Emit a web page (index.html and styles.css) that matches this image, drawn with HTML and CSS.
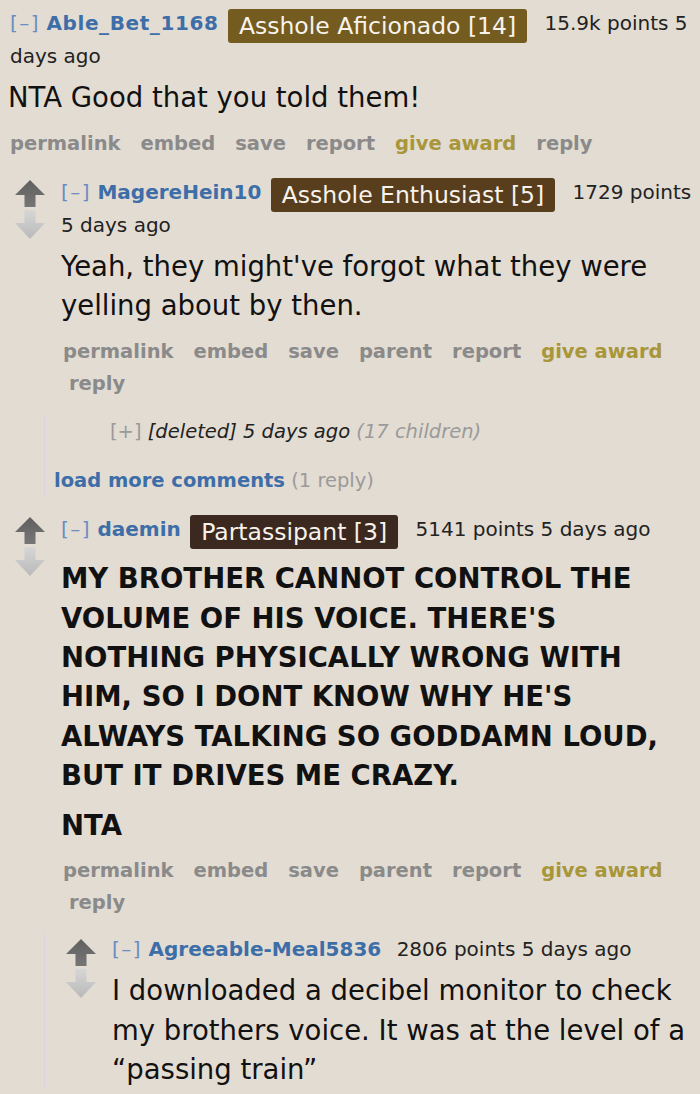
FILE: index.html
```html
<!DOCTYPE html>
<html lang="en">
<head>
<meta charset="utf-8">
<title>Comments</title>
<link rel="stylesheet" href="styles.css">
</head>
<body>
<svg class="defs" width="0" height="0" aria-hidden="true">
  <defs>
    <linearGradient id="gUp" x1="0" y1="0" x2="0" y2="1">
      <stop offset="0" stop-color="#5f5f5f"/>
      <stop offset="1" stop-color="#767676"/>
    </linearGradient>
    <linearGradient id="gDown" x1="0" y1="0" x2="0" y2="1">
      <stop offset="0" stop-color="#d6d6d6"/>
      <stop offset="1" stop-color="#b9b9b9"/>
    </linearGradient>
  </defs>
</svg>
<div class="page">
  <div class="thread">
    <div class="entry">
      <p class="tagline first"><span class="expand">[–]</span> <span class="author wide">Able_Bet_1168</span> <span class="flair f1">Asshole Aficionado [14]</span> <span class="score">15.9k points</span> 5 <span class="time">days ago</span></p>
      <div class="md"><p>NTA Good that you told them!</p></div>
      <ul class="buttons">
        <li>permalink</li><li>embed</li><li>save</li><li>report</li><li class="award">give award</li><li>reply</li>
      </ul>
    </div>

    <div class="replies">
      <div class="comment">
        <div class="midcol">
          <svg class="arrow up" viewBox="0 0 30 27" width="30" height="27"><polygon points="15,0 30,15 20.5,15 20.5,27 9.5,27 9.5,15 0,15"/></svg>
          <svg class="arrow down" viewBox="0 0 30 29" width="30" height="29"><polygon points="9.5,0 20.5,0 20.5,13 30,13 15,29 0,13 9.5,13"/></svg>
        </div>
        <div class="body">
          <div class="entry">
            <p class="tagline"><span class="expand">[–]</span> <span class="author">MagereHein10</span> <span class="flair f2">Asshole Enthusiast [5]</span> <span class="score">1729 points</span> <span class="time">5 days ago</span></p>
            <div class="md"><p>Yeah, they might've forgot what they were yelling about by then.</p></div>
            <ul class="buttons">
              <li>permalink</li><li>embed</li><li>save</li><li>parent</li><li>report</li><li class="award">give award</li><li>reply</li>
            </ul>
          </div>
        </div>
      </div>
      <div class="child">
        <div class="collapsed">
          <p class="tagline"><span class="muted">[+]</span> <em class="dark">[deleted] 5 days ago</em> <em class="muted">(17 children)</em></p>
        </div>
        <p class="more"><span class="more-link">load more comments</span> <span class="muted">(1 reply)</span></p>
      </div>

      <div class="comment sibling">
        <div class="midcol">
          <svg class="arrow up" viewBox="0 0 30 27" width="30" height="27"><polygon points="15,0 30,15 20.5,15 20.5,27 9.5,27 9.5,15 0,15"/></svg>
          <svg class="arrow down" viewBox="0 0 30 29" width="30" height="29"><polygon points="9.5,0 20.5,0 20.5,13 30,13 15,29 0,13 9.5,13"/></svg>
        </div>
        <div class="body">
          <div class="entry">
            <p class="tagline"><span class="expand">[–]</span> <span class="author">daemin</span> <span class="flair f3">Partassipant [3]</span> <span class="score">5141 points</span> <span class="time">5 days ago</span></p>
            <div class="md strong">
              <p>MY BROTHER CANNOT CONTROL THE VOLUME OF HIS VOICE. THERE'S NOTHING PHYSICALLY WRONG WITH HIM, SO I DONT KNOW WHY HE'S ALWAYS TALKING SO GODDAMN LOUD, BUT IT DRIVES ME CRAZY.</p>
              <p>NTA</p>
            </div>
            <ul class="buttons">
              <li>permalink</li><li>embed</li><li>save</li><li>parent</li><li>report</li><li class="award">give award</li><li>reply</li>
            </ul>
          </div>
        </div>
      </div>
      <div class="child last">
        <div class="comment nested">
          <div class="midcol">
            <svg class="arrow up" viewBox="0 0 30 27" width="30" height="27"><polygon points="15,0 30,15 20.5,15 20.5,27 9.5,27 9.5,15 0,15"/></svg>
            <svg class="arrow down" viewBox="0 0 30 29" width="30" height="29"><polygon points="9.5,0 20.5,0 20.5,13 30,13 15,29 0,13 9.5,13"/></svg>
          </div>
          <div class="body">
            <div class="entry">
              <p class="tagline"><span class="expand">[–]</span> <span class="author">Agreeable-Meal5836</span> <span class="score gap">2806 points</span> <span class="time">5 days ago</span></p>
              <div class="md"><p>I downloaded a decibel monitor to check my brothers voice. It was at the level of a “passing train”</p></div>
            </div>
          </div>
        </div>
      </div>
    </div>
  </div>
</div>
</body>
</html>
```

FILE: styles.css
```css
* { box-sizing: border-box; }
html, body {
  margin: 0;
  padding: 0;
  background: #e3dcd2;
}
body {
  font-family: "DejaVu Sans", Verdana, sans-serif;
  color: #111;
  overflow: hidden;
}
.defs { position: absolute; width: 0; height: 0; }
.page {
  width: 700px;
  padding: 9px 8px 0 8px;
}

/* tagline */
.tagline {
  margin: 0;
  font-size: 20px;
  line-height: 27px;
  color: #222;
}
.tagline.first { padding-left: 2px; }
.expand { color: #6a8ec2; letter-spacing: 1.5px; }
.author { color: #3d6ea8; font-weight: bold; }
.author.wide { letter-spacing: 0.6px; }
.flair {
  display: inline-block;
  font-size: 23.5px;
  line-height: 26px;
  letter-spacing: 0;
  padding: 4px 11px;
  border-radius: 3px;
  color: #f7f3ec;
  vertical-align: -4px;
  margin: 0 11px 0 3px;
}
.f1 { background: #745b1f; }
.f2 { background: #583e1c; }
.f3 { background: #3b2920; }
.gap { margin-left: 9px; }

/* body text */
.md {
  font-size: 27.5px;
  line-height: 39.3px;
  color: #111;
  margin-top: 8px;
}
.md p { margin: 0; }
.md p + p { margin-top: 11px; }
.md.strong { font-weight: bold; margin-top: 10px; }

/* buttons */
.buttons {
  list-style: none;
  margin: 11px 0 0 0;
  padding: 0;
  display: flex;
  flex-wrap: wrap;
  font-size: 19.5px;
  line-height: 31.5px;
  font-weight: bold;
  color: #8a8a8a;
}
.md.strong + .buttons { margin-top: 10px; }
.buttons li { padding: 0 12px 0 8px; }
.buttons li:first-child { padding-left: 2px; }
.buttons .award { color: #a8963a; }

/* nesting */
.replies {
  padding-left: 7px;
  margin-top: 18px;
}
.comment {
  display: flex;
  align-items: flex-start;
}
.comment.sibling { margin-top: 19px; }
.midcol {
  width: 46px;
  flex: none;
  display: flex;
  flex-direction: column;
  gap: 3px;
  padding-top: 2px;
}
.nested .midcol { padding-top: 3px; }
.body { flex: 1; min-width: 0; }
.arrow { display: block; }
.arrow.up { fill: url(#gUp); }
.arrow.down { fill: url(#gDown); }

.child {
  margin: 17px 0 0 29px;
  border-left: 1px solid #d8d5e0;
}
.child.last { margin-top: 16px; }
.child .comment.nested { margin-left: 21px; padding-top: 2px; }
.collapsed { padding-left: 65px; }
.collapsed .tagline { font-size: 19.5px; line-height: 31px; }
.muted { color: #9a9a9a; }
.dark { color: #222; }
.more {
  margin: 18px 0 0 9px;
  font-size: 19.5px;
  line-height: 31px;
}
.more-link { color: #3d6ea8; font-weight: bold; }
```
